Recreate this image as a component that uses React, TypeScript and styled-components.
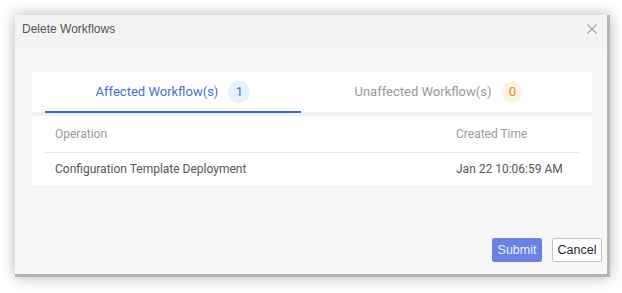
import styled, { createGlobalStyle } from 'styled-components';

const GlobalStyle = createGlobalStyle`
  body {
    margin: 0;
    background: #ffffff;
    font-family: Roboto, 'Liberation Sans', Arial, sans-serif;
  }
`;

const Page = styled.div`
  padding: 15px;
`;

const Dialog = styled.div`
  width: 592px;
  height: 259px;
  display: flex;
  flex-direction: column;
  background: #f7f7f7;
  border-right: 3px solid #b6b6b6;
  border-bottom: 3px solid #b3b3b3;
  box-shadow: 0 0 14px rgba(0, 0, 0, 0.3);
`;

const Header = styled.div`
  height: 34px;
  flex: none;
  box-sizing: border-box;
  display: flex;
  align-items: flex-start;
  justify-content: space-between;
  padding: 7px 10px 0 7px;
  background: #f3f3f3;
  color: #555;
  font-family: 'Liberation Sans', Arial, sans-serif;
  font-size: 12px;
  line-height: 14px;
`;

const Close = styled.button`
  border: 0;
  background: none;
  padding: 0;
  margin-top: 2px;
  width: 10px;
  height: 10px;
  display: flex;
  cursor: pointer;
`;

const Body = styled.div`
  flex: 1;
  display: flex;
  flex-direction: column;
  padding: 23px 5px 12px 17px;
`;

const Card = styled.div`
  background: #fff;
  margin-right: 10px;
`;

const TabBar = styled.div`
  display: flex;
  gap: 10px;
  padding: 0 13px;
  height: 40px;
  border-bottom: 4px solid #f0f1f3;
`;

const Tab = styled.div<{ active?: boolean }>`
  width: 256px;
  display: flex;
  align-items: center;
  justify-content: center;
  gap: 10px;
  font-size: 13px;
  color: ${({ active }) => (active ? '#3f6fd6' : '#999')};
  border-bottom: 2px solid ${({ active }) => (active ? '#4462d0' : 'transparent')};
  margin-bottom: -1px;
`;

const Badge = styled.span<{ tone: 'blue' | 'orange' }>`
  width: 22px;
  height: 22px;
  border-radius: 50%;
  display: inline-flex;
  align-items: center;
  justify-content: center;
  font-size: 13px;
  background: ${({ tone }) => (tone === 'blue' ? '#e4f3fd' : '#fdf3e2')};
  color: ${({ tone }) => (tone === 'blue' ? '#3f6fd6' : '#d48f00')};
`;

const Table = styled.div`
  padding: 0 13px;
`;

const Row = styled.div<{ head?: boolean }>`
  display: grid;
  grid-template-columns: 1fr 133px;
  align-items: center;
  height: ${({ head }) => (head ? '36px' : '32px')};
  font-size: 12px;
  color: ${({ head }) => (head ? '#999' : '#555')};
  border-bottom: ${({ head }) => (head ? '1px solid #e6e6e6' : 'none')};
`;

const Cell = styled.div`
  padding-left: 10px;
`;

const Footer = styled.div`
  margin-top: auto;
  display: flex;
  justify-content: flex-end;
  gap: 10px;
`;

const Button = styled.button<{ primary?: boolean }>`
  width: 50px;
  height: 24px;
  padding: 0;
  border-radius: 2px;
  font-family: 'Liberation Sans', Arial, sans-serif;
  font-size: 12.5px;
  cursor: pointer;
  background: ${({ primary }) => (primary ? '#6a82e6' : '#fff')};
  color: ${({ primary }) => (primary ? '#eef1ff' : '#1f1f3a')};
  border: 1px solid ${({ primary }) => (primary ? '#6a82e6' : '#c4c4c4')};
`;

export default function App() {
  return (
    <Page>
      <GlobalStyle />
      <Dialog>
        <Header>
          <span>Delete Workflows</span>
          <Close aria-label="close">
            <svg width="10" height="10" viewBox="0 0 10 10">
              <path d="M0.5 0.5L9.5 9.5M9.5 0.5L0.5 9.5" stroke="#a0a0a0" strokeWidth="1.1" />
            </svg>
          </Close>
        </Header>
        <Body>
          <Card>
            <TabBar>
              <Tab active>
                Affected Workflow(s) <Badge tone="blue">1</Badge>
              </Tab>
              <Tab>
                Unaffected Workflow(s) <Badge tone="orange">0</Badge>
              </Tab>
            </TabBar>
            <Table>
              <Row head>
                <Cell>Operation</Cell>
                <Cell>Created Time</Cell>
              </Row>
              <Row>
                <Cell>Configuration Template Deployment</Cell>
                <Cell>Jan 22 10:06:59 AM</Cell>
              </Row>
            </Table>
          </Card>
          <Footer>
            <Button primary>Submit</Button>
            <Button>Cancel</Button>
          </Footer>
        </Body>
      </Dialog>
    </Page>
  );
}
